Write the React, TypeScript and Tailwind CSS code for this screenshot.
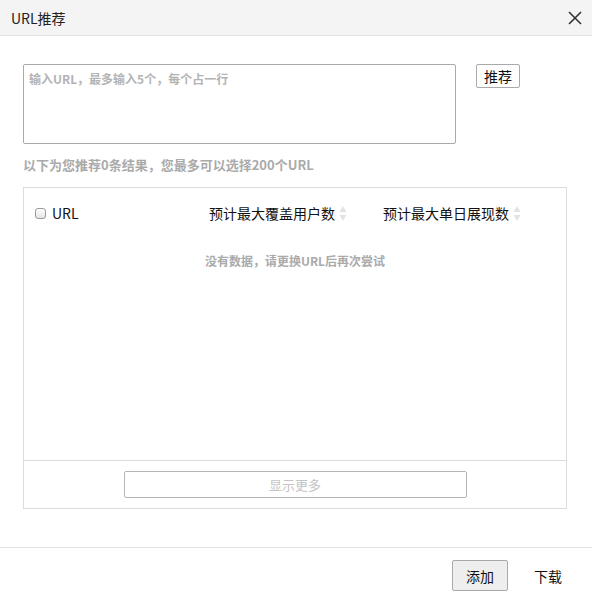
import React from "react";

function SortIcon() {
  return (
    <svg width="8" height="17" viewBox="0 0 8 17" className="ml-[4px] shrink-0">
      <path d="M4 1 L7.5 7 L0.5 7 Z" fill="#e3e3e3" />
      <path d="M4 16 L7.5 10 L0.5 10 Z" fill="#e3e3e3" />
    </svg>
  );
}

export default function App() {
  return (
    <div
      className="w-[592px] h-[595px] bg-white flex flex-col text-[#333]"
      style={{ fontFamily: '"Noto Sans CJK SC", "Liberation Sans", sans-serif' }}
    >
      <div className="h-[36px] shrink-0 bg-[#f4f4f4] border-b border-[#e2e2e2] flex items-center justify-between pl-[11px] pr-[10px]">
        <span className="text-[14px] leading-[20px] text-[#222]">URL推荐</span>
        <svg width="14" height="14" viewBox="0 0 14 14">
          <path d="M1 1 L13 13 M13 1 L1 13" stroke="#333" strokeWidth="1.6" />
        </svg>
      </div>

      <div className="flex-1 flex flex-col pl-[23px] pr-[25px]">
        <div className="flex items-start mt-[28px]">
          <div className="w-[433px] h-[80px] border border-[#a9a9a9] rounded-[2px] px-[5px] pt-0">
            <span className="text-[12px] leading-[18px] font-bold text-[#b3b3b3]">
              输入URL，最多输入5个，每个占一行
            </span>
          </div>
          <button className="ml-[20px] w-[44px] h-[24px] border border-[#a9a9a9] rounded-[2px] bg-white text-[14px] leading-[20px] text-[#111]">
            推荐
          </button>
        </div>

        <div className="mt-[12px] text-[13px] leading-[18px] font-bold text-[#aaaaaa]">
          以下为您推荐0条结果，您最多可以选择200个URL
        </div>

        <div className="mt-[13px] h-[322px] border border-[#dcdcdc] flex flex-col">
          <div className="flex-1 flex flex-col">
            <div className="grid grid-cols-[174px_174px_174px] pl-[11px] pt-[17px] h-[52px] items-start">
              <div className="flex items-center h-[17px]">
                <span className="w-[11px] h-[11px] rounded-[3px] border border-[#9a9a9a] bg-[linear-gradient(#fdfdfd,#e6e6e6)]" />
                <span className="ml-[6px] text-[14px] leading-[17px] text-[#111]">URL</span>
              </div>
              <div className="flex items-center h-[17px]">
                <span className="text-[14px] leading-[17px] text-[#111]">预计最大覆盖用户数</span>
                <SortIcon />
              </div>
              <div className="flex items-center h-[17px]">
                <span className="text-[14px] leading-[17px] text-[#111]">预计最大单日展现数</span>
                <SortIcon />
              </div>
            </div>
            <div className="mt-[12px] text-center text-[12px] leading-[18px] font-bold text-[#aaaaaa]">
              没有数据，请更换URL后再次尝试
            </div>
          </div>
          <div className="h-[48px] border-t border-[#dcdcdc] flex justify-center pt-[10px]">
            <button className="w-[343px] h-[27px] border border-[#b5b5b5] rounded-[2px] bg-white text-[13px] leading-[18px] text-[#c4c4c4]">
              显示更多
            </button>
          </div>
        </div>
      </div>

      <div className="h-[48px] shrink-0 border-t border-[#e2e2e2] flex items-start justify-end pt-[12px] pr-[30px]">
        <button className="w-[56px] h-[31px] border border-[#a9a9a9] rounded-[2px] bg-[#eeeeee] text-[14px] leading-[20px] text-[#111]">
          添加
        </button>
        <span className="ml-[26px] mt-[6px] text-[14px] leading-[20px] text-[#111]">下载</span>
      </div>
    </div>
  );
}
